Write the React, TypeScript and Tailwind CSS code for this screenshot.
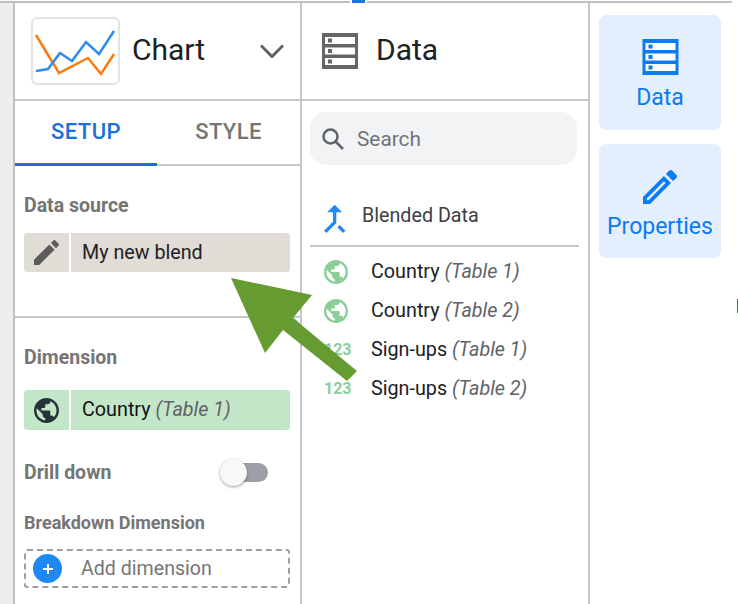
import React from 'react';

const GLOBE = 'M12 2C6.48 2 2 6.48 2 12s4.48 10 10 10 10-4.48 10-10S17.52 2 12 2zm-1 17.93c-3.95-.49-7-3.85-7-7.93 0-.62.08-1.21.21-1.79L9 15v1c0 1.1.9 2 2 2v1.93zm6.9-2.54c-.26-.81-1-1.39-1.9-1.39h-1v-3c0-.55-.45-1-1-1H8v-2h2c.55 0 1-.45 1-1V7h2c1.1 0 2-.9 2-2v-.41c2.93 1.19 5 4.06 5 7.41 0 2.08-.8 3.97-2.1 5.39z';

const Globe = ({ className }: { className: string }) => (
    <svg viewBox="2 2 20 20" className={className} fill="currentColor">
        <path d={GLOBE} />
    </svg>
);

const Storage = ({ className }: { className: string }) => (
    <svg viewBox="0 0 36 36" className={className}>
        <path fill="currentColor" d="M0 0h36v36H0z" />
        <path fill="#fff" d="M3 4h30v7H3zM3 14.500h30v7H3zM3 25h30v7H3z" />
        <path fill="currentColor" d="M6 5.500h4v4H6zM6 16h4v4H6zM6 26.500h4v4H6z" />
    </svg>
);

const FieldRow = ({ name, table, icon }: { name: string; table: string; icon: React.ReactNode }) => (
    <div className="flex items-center h-[39px]">
        <div className="w-[61px] pl-[14px] flex items-center">{icon}</div>
        <span className="text-[19.750px] text-[#202124]">
            {name} <i className="text-[#5f6368]">{table}</i>
        </span>
    </div>
);

const Label = ({ children, className }: { children: React.ReactNode; className: string }) => (
    <div className={`font-bold text-[#757575] ${className}`}>{children}</div>
);

export default function App() {
    const globe = <Globe className="w-[24px] h-[24px] text-[#8bce97]" />;
    const numeric = <span className="text-[16px] font-bold text-[#8bce97] leading-none">123</span>;

    return (
        <div className="relative w-[738px] h-[604px] overflow-hidden bg-white flex font-['Roboto',sans-serif]">
            {/* gutter */}
            <div className="w-[15px] mt-[3px] bg-[#eeeeee] border-r-2 border-[#bdc1c6] shrink-0" />

            {/* setup column */}
            <div className="w-[287px] shrink-0 mt-[3px] border-r-2 border-[#c4c7cb] flex flex-col">
                <div className="h-[98px] border-b-2 border-[#c4c7cb] flex items-center pl-[16px]">
                    <div className="w-[89px] h-[68px] rounded-[6px] border-2 border-[#e3e3e3] flex items-center justify-center">
                        <svg viewBox="2 2 85 64" className="w-[85px] h-[64px]" fill="none" strokeWidth="2.500">
                            <path stroke="#fb7c0d" d="M5 18l23 38 29-15 13 16 13-20" />
                            <path stroke="#2b8df5" d="M5 54l12-2 12-16 12 8 14-19 13 12 15-23" />
                        </svg>
                    </div>
                    <span className="ml-[12px] pb-[2px] text-[30px] leading-none text-[#202124]">Chart</span>
                    <svg viewBox="0 0 24 14" className="w-[24px] h-[14px] ml-[55px]" fill="none" stroke="#5f6368" strokeWidth="3">
                        <path d="M1 1.500l11 11 11-11" />
                    </svg>
                </div>

                <div className="h-[65px] border-b-2 border-[#c4c7cb] flex relative">
                    <div className="w-[142px] pb-[2px] flex items-center justify-center text-[22px] font-medium text-[#1a6fdc] border-b-[3px] border-[#1a6fdc] -mb-[2px] tracking-[0.4px]">SETUP</div>
                    <div className="w-[143px] pb-[2px] flex items-center justify-center text-[22px] font-medium text-[#757575] tracking-[0.4px]">STYLE</div>
                </div>

                <div className="h-[152px] border-b-2 border-[#c4c7cb] pl-[9px] pr-[10px] pt-[29px]">
                    <Label className="text-[19.500px] leading-[22px]">Data source</Label>
                    <div className="mt-[16px] h-[39px] rounded-[3px] bg-[#e0dcd6] flex items-center">
                        <div className="w-[47px] h-full flex items-center justify-center border-r-2 border-white">
                            <svg viewBox="3 3 18 18" className="w-[25px] h-[25px] text-[#5c5c5c]" fill="currentColor">
                                <path d="M3 17.250V21h3.750L17.810 9.940l-3.750-3.750L3 17.250zM20.710 7.040c.39-.39.39-1.020 0-1.410l-2.340-2.340c-.39-.39-1.020-.39-1.410 0l-1.830 1.830 3.750 3.750 1.830-1.830z" />
                            </svg>
                        </div>
                        <span className="ml-[11px] text-[19.700px] text-[#202124]">My new blend</span>
                    </div>
                </div>

                <div className="pl-[9px] pr-[10px] pt-[29px]">
                    <Label className="text-[19.500px] leading-[22px]">Dimension</Label>
                    <div className="mt-[21px] h-[40px] rounded-[3px] bg-[#c4e6c8] flex items-center">
                        <div className="w-[47px] h-full flex items-center justify-center border-r-2 border-white">
                            <Globe className="w-[25px] h-[25px] text-[#263238]" />
                        </div>
                        <span className="ml-[11px] text-[19.750px] text-[#111]">
                            Country <i className="text-[#5f6368]">(Table 1)</i>
                        </span>
                    </div>
                    <div className="mt-[27px] flex items-center justify-between h-[30px]">
                        <Label className="text-[19.500px] leading-[22px] pt-[2px]">Drill down</Label>
                        <div className="relative w-[48px] h-[20px] mr-[22px]">
                            <div className="absolute right-0 top-[1px] w-[40px] h-[19px] rounded-full bg-[#9aa0a6]" />
                            <div className="absolute left-0 top-[-3px] w-[27px] h-[27px] rounded-full bg-[#f8f8f8] shadow-[0_1px_3px_rgba(0,0,0,0.4)]" />
                        </div>
                    </div>
                    <Label className="text-[18px] leading-[22px] mt-[25px]">Breakdown Dimension</Label>
                    <div className="mt-[15px] h-[39px] rounded-[3px] border-2 border-dashed border-[#9aa0a6] flex items-center">
                        <div className="w-[29px] h-[29px] ml-[7px] rounded-full bg-[#1e88f5] flex items-center justify-center">
                            <svg viewBox="0 0 12 12" className="w-[12px] h-[12px]" stroke="#fff" strokeWidth="2">
                                <path d="M6 1v10M1 6h10" />
                            </svg>
                        </div>
                        <span className="ml-[19px] text-[19.600px] text-[#757575]">Add dimension</span>
                    </div>
                </div>
            </div>

            {/* data column */}
            <div className="w-[288px] shrink-0 mt-[3px] border-r-2 border-[#c4c7cb] flex flex-col">
                <div className="h-[98px] border-b-2 border-[#c4c7cb] flex items-center pl-[20px]">
                    <Storage className="w-[36px] h-[36px] text-[#666666]" />
                    <span className="ml-[18px] pb-[2px] text-[30px] leading-none text-[#202124]">Data</span>
                </div>
                <div className="px-[8px] pt-[11px]">
                    <div className="h-[53px] w-[267px] rounded-[16px] bg-[#f1f3f4] flex items-center pl-[12px]">
                        <svg viewBox="0 0 22 22" className="w-[22px] h-[22px]" fill="none" stroke="#5f6368" strokeWidth="2.500">
                            <circle cx="8.500" cy="8.500" r="7" />
                            <path d="M13.500 13.500l7.500 7.500" />
                        </svg>
                        <span className="ml-[13px] pt-[2px] text-[20.800px] text-[#70757a]">Search</span>
                    </div>
                    <div className="mt-[33px] h-[49px] pt-[6px] w-[269px] border-b-2 border-[#c4c7cb] flex">
                        <svg viewBox="5 3 15 18" className="w-[25px] h-[30px] ml-[13px] text-[#1e88f5]" fill="currentColor">
                            <path d="M17 20.410L18.410 19 15 15.590 13.590 17 17 20.410zM7.500 8H11v5.590L5.590 19 7 20.410l6-6V8h3.500L12 3.500 7.500 8z" />
                        </svg>
                        <span className="ml-[14px] text-[19.700px] leading-[24px] text-[#3c4043]">Blended Data</span>
                    </div>
                    <div className="mt-[5px]">
                        <FieldRow name="Country" table="(Table 1)" icon={globe} />
                        <FieldRow name="Country" table="(Table 2)" icon={globe} />
                        <FieldRow name="Sign-ups" table="(Table 1)" icon={numeric} />
                        <FieldRow name="Sign-ups" table="(Table 2)" icon={numeric} />
                    </div>
                </div>
            </div>

            {/* side tabs */}
            <div className="flex-1 mt-[3px] pl-[9px] pt-[12px] flex flex-col gap-[14px]">
                <div className="w-[122px] h-[115px] rounded-[8px] bg-[#e3effd] flex flex-col items-center pt-[24px] text-[#0b7bf5]">
                    <Storage className="w-[37px] h-[36px] text-[#0b7bf5]" />
                    <span className="mt-[9px] text-[23px] leading-[28px]">Data</span>
                </div>
                <div className="w-[122px] h-[114px] rounded-[8px] bg-[#e3effd] flex flex-col items-center pt-[26px] text-[#0b7bf5]">
                    <svg viewBox="3 3 18 18" className="w-[34px] h-[34px]" fill="currentColor">
                        <path d="M14.060 9.020l.92.92L5.920 19H5v-.92l9.060-9.060M17.660 3c-.25 0-.51.1-.7.29l-1.830 1.830 3.750 3.750 1.830-1.830c.39-.39.39-1.020 0-1.410l-2.340-2.340c-.2-.2-.45-.29-.71-.29zm-3.600 3.190L3 17.250V21h3.750L17.810 9.940l-3.750-3.750z" />
                    </svg>
                    <span className="mt-[9px] text-[23px] leading-[28px]">Properties</span>
                </div>
            </div>

            {/* top rule and stray selection handles */}
            <div className="absolute left-0 top-[1px] w-[732px] h-[2px] bg-[#bdc1c6]" />
            <div className="absolute left-[350px] top-0 w-[17px] h-[3px] bg-[#1a73e8] border-x-2 border-white" />
            <div className="absolute left-[737px] top-[299px] w-[1px] h-[14px] bg-[#1a73e8]" />

            {/* annotation arrow */}
            <svg className="absolute left-0 top-0 w-[738px] h-[604px] pointer-events-none" viewBox="0 0 738 604">
                <path d="M293 317l9 9-2 2z" fill="#7b6cf0" />
                <path d="M231 278l81 17-19 23 64 53-10 10-64-51-18 23z" fill="#669b31" />
            </svg>
        </div>
    );
}
